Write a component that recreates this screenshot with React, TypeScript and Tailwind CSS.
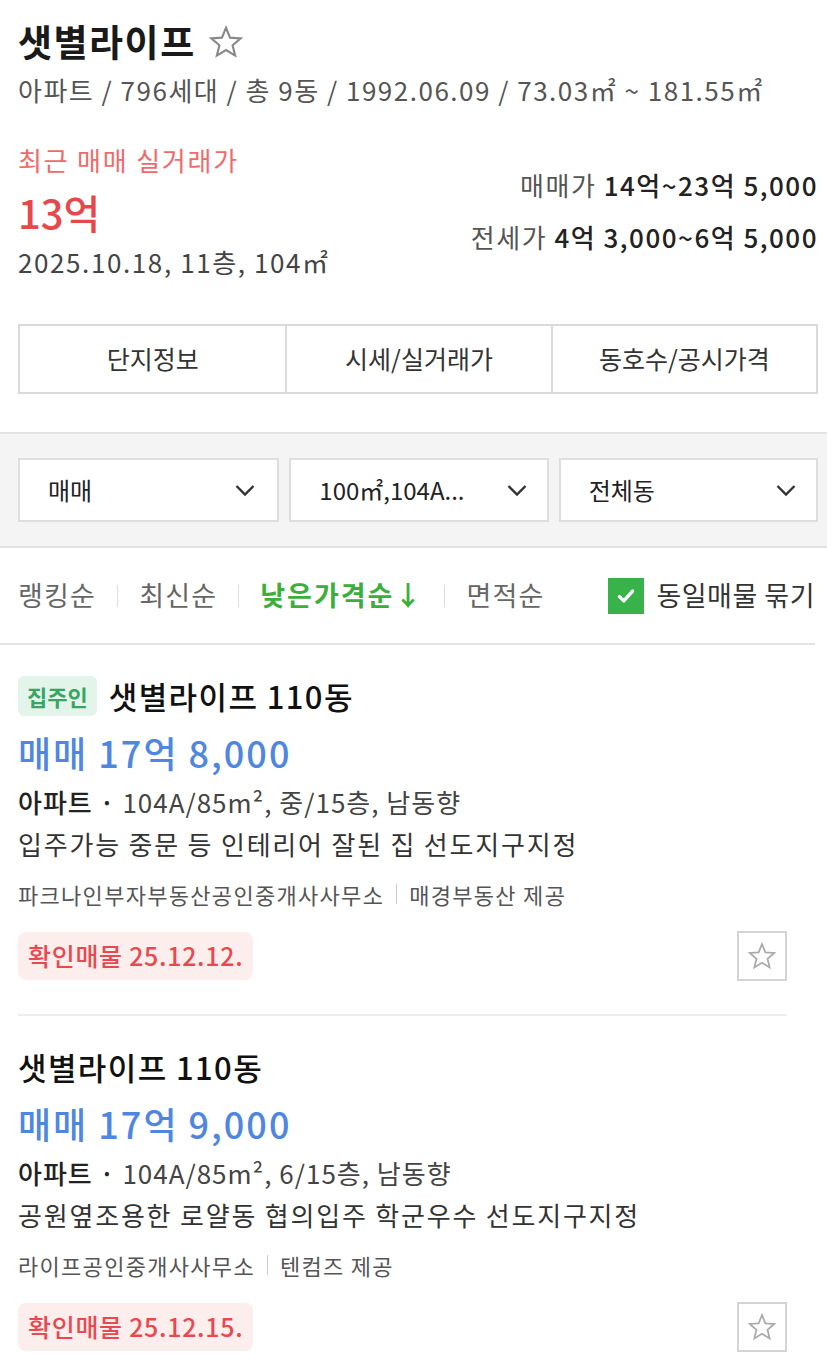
import React from "react";

const font = { fontFamily: '"Noto Sans CJK KR", "Noto Sans", sans-serif' };

function StarIcon({ className }: { className?: string }) {
  return (
    <svg viewBox="0 0 24 24" className={className} fill="none" stroke="currentColor" strokeWidth={1.4} strokeLinejoin="miter">
      <path d="M12 2.5l2.7 6.6 7.1.5-5.4 4.6 1.7 6.9L12 17.4l-6.1 3.7 1.7-6.9-5.4-4.6 7.1-.5z" />
    </svg>
  );
}

function Chevron() {
  return (
    <svg viewBox="0 0 24 24" className="w-[24px] h-[24px] text-[#333]" fill="none" stroke="currentColor" strokeWidth={2.4}>
      <path d="M3.5 8l8.5 8.5 8.5-8.5" />
    </svg>
  );
}

function Listing({
  owner,
  title,
  price,
  spec,
  desc,
  agent,
  provider,
  confirmed,
}: {
  owner?: boolean;
  title: string;
  price: string;
  spec: string;
  desc: string;
  agent: string;
  provider: string;
  confirmed: string;
}) {
  return (
    <div className="ml-[18px] mr-[40px] border-b-2 border-[#eeeeee] pt-[29px] pb-[33px]">
      <div className="flex items-center gap-[12px] h-[44px]">
        {owner && (
          <span className="bg-[#e3f5ea] text-[#3aa463] text-[22px] font-bold rounded-[6px] px-[9px] h-[40px] flex items-center">
            집주인
          </span>
        )}
        <span className="text-[31px] font-medium text-[#111] tracking-[1.4px]">{title}</span>
      </div>
      <div className="text-[36px] text-[#4f86e0] font-medium mt-[10px] leading-[48px] tracking-[2px]">{price}</div>
      <div className="text-[26px] text-[#444] mt-[6px] leading-[40px] tracking-[1px]">
        <span className="text-[#222] font-medium">아파트 · </span>
        {spec}
      </div>
      <div className="text-[26px] text-[#333] mt-[2px] leading-[40px] tracking-[1.8px]">{desc}</div>
      <div className="flex items-center text-[22px] text-[#555] mt-[12px] leading-[36px] tracking-[1.3px]">
        <span>{agent}</span>
        <span className="mx-[12px] w-px h-[20px] bg-[#ccc]" />
        <span>{provider}</span>
      </div>
      <div className="flex items-center justify-between mt-[19px]">
        <span className="bg-[#fdeeee] text-[#e8494e] text-[25px] font-medium rounded-[8px] px-[10px] h-[48px] flex items-center tracking-[0.7px]">
          확인매물 {confirmed}
        </span>
        <span className="w-[50px] h-[50px] border-2 border-[#d4d4d4] flex items-center justify-center text-[#aaa]">
          <StarIcon className="w-[30px] h-[30px]" />
        </span>
      </div>
    </div>
  );
}

export default function App() {
  return (
    <div className="w-[827px] min-h-[1368px] bg-white overflow-hidden" style={font}>
      {/* header */}
      <div className="pl-[18px] pr-[9px] pt-[16px]">
        <div className="flex items-center gap-[12px] h-[52px]">
          <h1 className="text-[37px] font-bold text-[#1a1a1a] tracking-[1.5px]">샛별라이프</h1>
          <StarIcon className="w-[36px] h-[36px] text-[#888]" />
        </div>
        <div className="text-[26px] text-[#555] leading-[40px] tracking-[1.5px] mt-[2px]">
          아파트 / 796세대 / 총 9동 / 1992.06.09 / 73.03㎡ ~ 181.55㎡
        </div>

        <div className="flex justify-between mt-[30px]">
          <div>
            <div className="text-[26px] text-[#f06a6a] leading-[40px] tracking-[1.8px]">최근 매매 실거래가</div>
            <div className="text-[40px] text-[#e8484b] leading-[56px] font-medium mt-[4px]">13억</div>
            <div className="text-[26px] text-[#444] leading-[40px] tracking-[1.6px] mt-[2px]">2025.10.18, 11층, 104㎡</div>
          </div>
          <div className="text-right mt-[19px] text-[26px] tracking-[1.5px]">
            <div className="leading-[52px]">
              <span className="text-[#555]">매매가 </span>
              <span className="text-[#222] font-medium">14억~23억 5,000</span>
            </div>
            <div className="leading-[52px]">
              <span className="text-[#555]">전세가 </span>
              <span className="text-[#222] font-medium">4억 3,000~6억 5,000</span>
            </div>
          </div>
        </div>

        {/* tabs */}
        <div className="grid grid-cols-3 border-2 border-[#dadada] mt-[42px] h-[70px]">
          <div className="flex items-center justify-center text-[25px] text-[#333]">단지정보</div>
          <div className="flex items-center justify-center text-[25px] text-[#333] border-l-2 border-[#dadada]">시세/실거래가</div>
          <div className="flex items-center justify-center text-[25px] text-[#333] border-l-2 border-[#dadada]">동호수/공시가격</div>
        </div>
      </div>

      {/* filters */}
      <div className="mt-[38px] bg-[#f4f4f4] border-y-2 border-[#e2e2e2] pl-[18px] pr-[9px] py-[24px] flex gap-[10px]">
        <div className="flex-1 h-[64px] bg-white border-2 border-[#dedede] flex items-center justify-between pl-[28px] pr-[20px] text-[24px] text-[#222]">
          <span>매매</span>
          <Chevron />
        </div>
        <div className="flex-1 h-[64px] bg-white border-2 border-[#dedede] flex items-center justify-between pl-[28px] pr-[18px] text-[24px] text-[#222]">
          <span>100㎡,104A...</span>
          <Chevron />
        </div>
        <div className="flex-1 h-[64px] bg-white border-2 border-[#dedede] flex items-center justify-between pl-[28px] pr-[18px] text-[24px] text-[#222]">
          <span>전체동</span>
          <Chevron />
        </div>
      </div>

      {/* sort */}
      <div className="border-b-2 border-[#e4e4e4] mr-[12px]">
        <div className="flex items-center justify-between pl-[18px] pr-[0px] h-[95px]">
          <div className="flex items-center text-[27px] text-[#666] tracking-[1.2px]">
            <span>랭킹순</span>
            <span className="mx-[21px] w-px h-[22px] bg-[#ddd]" />
            <span>최신순</span>
            <span className="mx-[21px] w-px h-[22px] bg-[#ddd]" />
            <span className="text-[#3cae3c] font-bold tracking-[2px]">낮은가격순↓</span>
            <span className="mx-[21px] w-px h-[22px] bg-[#ddd]" />
            <span>면적순</span>
          </div>
          <div className="flex items-center gap-[12px]">
            <span className="w-[36px] h-[36px] bg-[#37b34a] flex items-center justify-center">
              <svg viewBox="0 0 20 20" className="w-[22px] h-[22px]" fill="none" stroke="white" strokeWidth={3} strokeLinecap="round" strokeLinejoin="round">
                <path d="M4 10.5l4 4 8-9" />
              </svg>
            </span>
            <span className="text-[27px] text-[#333] tracking-[0.5px]">동일매물 묶기</span>
          </div>
        </div>
      </div>

      <Listing
        owner
        title="샛별라이프 110동"
        price="매매 17억 8,000"
        spec="104A/85m², 중/15층, 남동향"
        desc="입주가능 중문 등 인테리어 잘된 집 선도지구지정"
        agent="파크나인부자부동산공인중개사사무소"
        provider="매경부동산 제공"
        confirmed="25.12.12."
      />
      <Listing
        title="샛별라이프 110동"
        price="매매 17억 9,000"
        spec="104A/85m², 6/15층, 남동향"
        desc="공원옆조용한 로얄동 협의입주 학군우수 선도지구지정"
        agent="라이프공인중개사사무소"
        provider="텐컴즈 제공"
        confirmed="25.12.15."
      />
    </div>
  );
}
